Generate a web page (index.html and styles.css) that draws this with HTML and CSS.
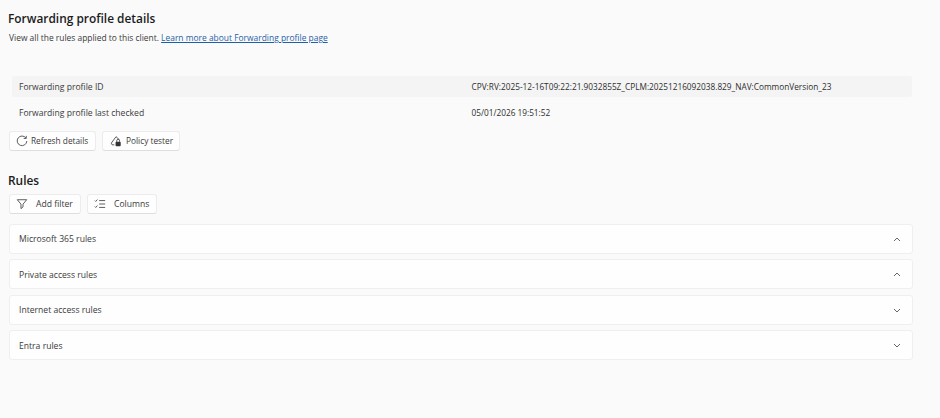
FILE: index.html
```html
<!DOCTYPE html>
<html lang="en">
<head>
<meta charset="utf-8">
<title>Forwarding profile details</title>
<link rel="stylesheet" href="styles.css">
</head>
<body>
<main class="page">
  <h1 class="title">Forwarding profile details</h1>
  <p class="intro">View all the rules applied to this client. <a class="link" href="#">Learn more about Forwarding profile page</a></p>
  <div class="table">
    <div class="row row-shaded"><span class="key">Forwarding profile ID</span><span class="val">CPV:RV:2025-12-16T09:22:21.9032855Z_CPLM:20251216092038.829_NAV:CommonVersion_23</span></div>
    <div class="row"><span class="key">Forwarding profile last checked</span><span class="val">05/01/2026 19:51:52</span></div>
  </div>
  <div class="buttons">
    <button class="btn btn-refresh"><svg class="ico" viewBox="0 0 14 14"><path d="M11.6 3.6A5.6 5.6 0 1 0 12.6 7M12 1v3h-3"/></svg>Refresh details</button>
    <button class="btn btn-policy"><svg class="ico" viewBox="0 0 14 14"><path d="M1.5 9.5 7 2l2 1.5M2.5 11.5l-1-2M2.5 11.5H5M9 3.5l1.5 2"/><rect class="fill" x="6.5" y="8" width="6" height="5" rx="1"/><path d="M7.8 8V6.8a1.7 1.7 0 0 1 3.4 0V8"/></svg>Policy tester</button>
  </div>
  <h2 class="subtitle">Rules</h2>
  <div class="buttons buttons-rules">
    <button class="btn btn-filter"><svg class="ico" viewBox="0 0 14 14"><path d="M1.5 2h11L8.2 7.2v3.2L5.8 12.4V7.2z"/></svg>Add filter</button>
    <button class="btn btn-columns"><svg class="ico" viewBox="0 0 14 14"><path d="M6 3h7M6 7h7M6 11h7M1 3l1 1 2-2.2M1 10l1 1 2-2.2"/></svg>Columns</button>
  </div>
  <section class="rules">
    <div class="card"><span>Microsoft 365 rules</span><svg class="chev" viewBox="0 0 8 5"><path d="M1 4l3-3 3 3"/></svg></div>
    <div class="card"><span>Private access rules</span><svg class="chev" viewBox="0 0 8 5"><path d="M1 4l3-3 3 3"/></svg></div>
    <div class="card"><span>Internet access rules</span><svg class="chev" viewBox="0 0 8 5"><path d="M1 1l3 3 3-3"/></svg></div>
    <div class="card"><span>Entra rules</span><svg class="chev" viewBox="0 0 8 5"><path d="M1 1l3 3 3-3"/></svg></div>
  </section>
</main>
</body>
</html>
```

FILE: styles.css
```css
* { box-sizing: border-box; }
html, body { margin: 0; height: 100%; }
body {
  background: #fafafa;
  color: #2b2b2b;
  font-family: "Open Sans", "Noto Sans", sans-serif;
  font-size: 8.6px;
  overflow: hidden;
}
.page { width: 940px; height: 418px; padding: 10px 28px 0 8px; }
.title { margin: 0; font-size: 11.9px; line-height: 17px; font-weight: 600; color: #1c1c1c; }
.intro { margin: 5px 0 0 1px; font-size: 8.43px; line-height: 12px; color: #3a3a3a; }
.link { color: #1f5fa8; text-decoration: underline; }
.table { margin: 32px 0 0 4px; }
.row { display: flex; align-items: baseline; height: 21px; line-height: 22px; padding-left: 7px; margin-bottom: 4.5px; border-radius: 2px; }
.row-shaded { background: #f4f4f4; }
.key { width: 452.5px; color: #3a3a3a; }
.val { color: #2e2e2e; font-size: 8.27px; }
.buttons { display: flex; gap: 6px; margin: 0 0 0 1px; }
.table + .buttons { margin-top: 8px; }
.btn {
  display: flex; align-items: center; height: 20px; padding: 0;
  background: #fefefe; border: 1px solid #ececec; border-bottom-color: #dedede; border-radius: 3px;
  font: inherit; color: #3a3a3a;
}
.btn-refresh { width: 87px; padding-left: 6px; gap: 3px; font-size: 8.3px; }
.btn-policy { width: 78px; padding-left: 7px; gap: 4px; font-size: 8.3px; }
.btn-filter { width: 72px; padding-left: 6px; gap: 8px; }
.btn-columns { width: 70px; padding-left: 6px; gap: 8px; }
.ico { width: 12px; height: 12px; fill: none; stroke: #444; stroke-width: 1; flex: none; }
.ico .fill { fill: #333; stroke: none; }
.subtitle { margin: 21px 0 0; font-size: 11.9px; line-height: 17px; font-weight: 600; color: #1c1c1c; }
.buttons-rules { margin-top: 5px; }
.rules { margin: 10px -1px 0 1px; display: flex; flex-direction: column; gap: 5.6px; }
.card {
  display: flex; align-items: center; justify-content: space-between;
  height: 30px; padding: 1px 11px 0 9px;
  background: #fefefe; border: 1px solid #efefef; border-radius: 3px; color: #3a3a3a;
}
.chev { width: 8px; height: 5px; fill: none; stroke: #666; stroke-width: 1; }
```
